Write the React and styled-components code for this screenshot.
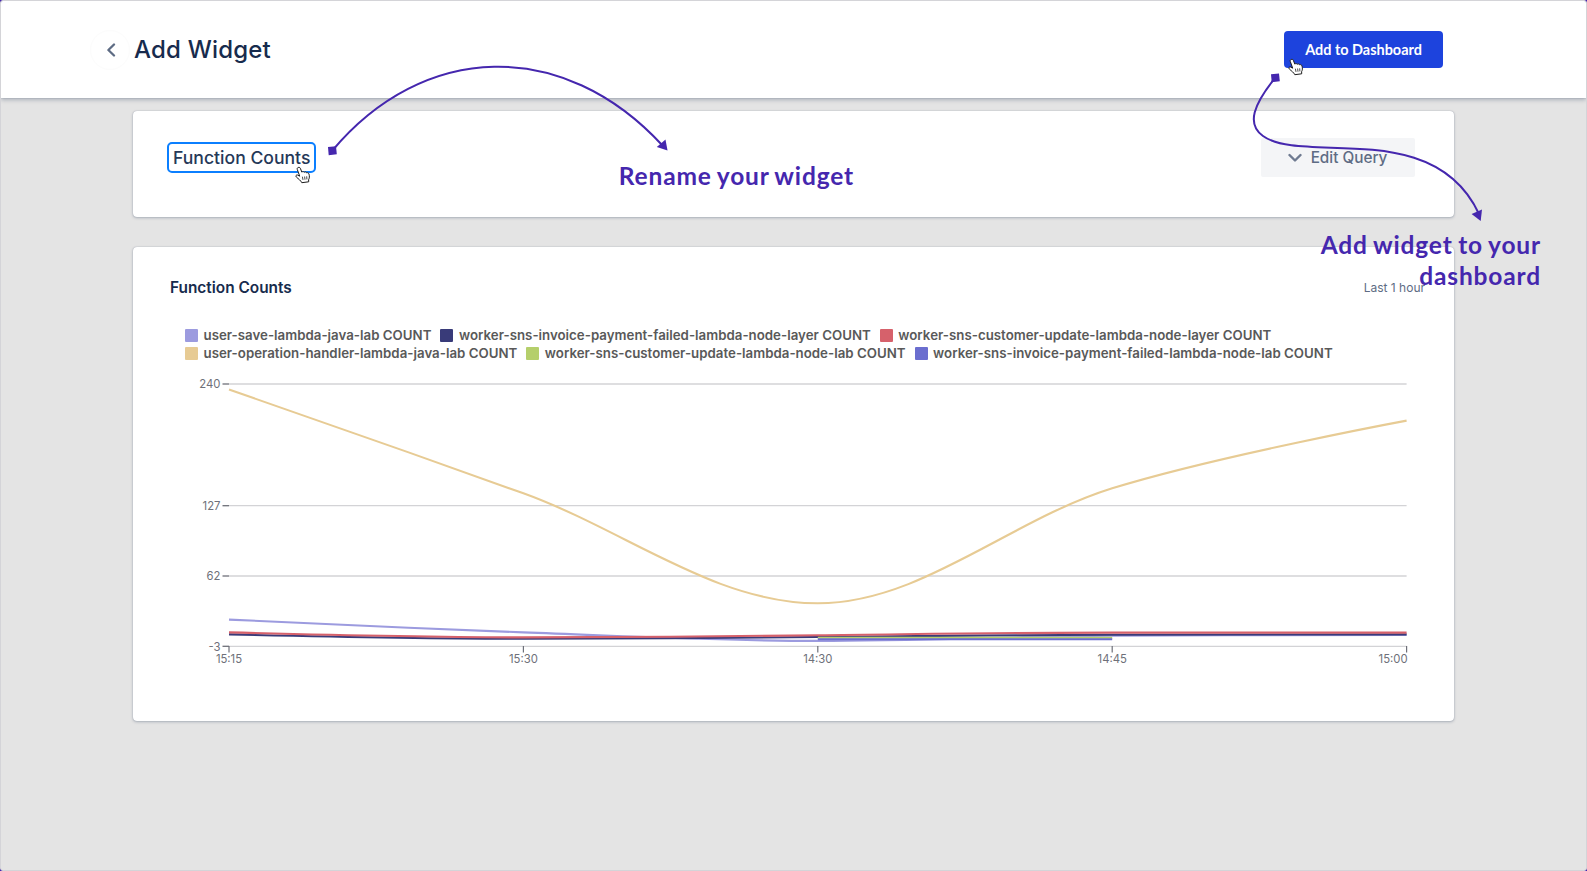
import React from "react";
import styled, { createGlobalStyle } from "styled-components";

const GlobalStyle = createGlobalStyle`
  * { box-sizing: border-box; }
  body { margin: 0; background: #4527ae; font-family: Inter, "Liberation Sans", sans-serif; }
`;

const Page = styled.div`
  position: relative;
  width: 1587px;
  height: 871px;
  background: #e4e4e4;
  border: 1px solid #d4d4d8;
  border-radius: 3px;
  overflow: hidden;
`;

const Header = styled.header`
  height: 97px;
  padding: 0 143px 0 89px;
  display: flex;
  align-items: center;
  justify-content: space-between;
  background: #fff;
  box-shadow: 0 0 1px rgba(9, 30, 66, 0.25), 0 2px 4px rgba(9, 30, 66, 0.25);
`;

const TitleGroup = styled.div`
  display: flex;
  align-items: center;
  gap: 4px;
`;

const BackButton = styled.button`
  width: 40px;
  height: 40px;
  padding: 0 0 0 1px;
  display: grid;
  place-items: center;
  border: 1px solid #fcfcfc;
  border-radius: 50%;
  background: #fff;
`;

const PageTitle = styled.h1`
  margin: 0;
  font-size: 24px;
  line-height: 32px;
  font-weight: 500;
  letter-spacing: 0.2px;
  color: #172b4d;
`;

const PrimaryButton = styled.button`
  width: 159px;
  height: 37px;
  padding: 0;
  border: 0;
  border-radius: 4px;
  background: #1d43dd;
  color: #fff;
  font: 700 14.45px/20px Lato, sans-serif;
`;

const Content = styled.main`
  padding: 13px 132px 0;
  display: flex;
  flex-direction: column;
  gap: 30px;
`;

const Card = styled.section`
  height: ${(p) => p.$height}px;
  background: #fff;
  border-radius: 4px;
  box-shadow: 0 0 1px rgba(9, 30, 66, 0.35), 0 1px 3px rgba(9, 30, 66, 0.25);
`;

const QueryCard = styled(Card)`
  padding: 27px 39px 0 34px;
  display: flex;
  justify-content: space-between;
  align-items: flex-start;
`;

const NameField = styled.div`
  width: 149px;
  height: 31px;
  margin-top: 4px;
  padding-left: 4px;
  border: 2px solid #0b7fff;
  border-radius: 5px;
  font-size: 17.6px;
  line-height: 27px;
  font-weight: 500;
  color: #253858;
  white-space: nowrap;
`;

const EditButton = styled.button`
  width: 154px;
  height: 39px;
  padding: 1px 1px 0 0;
  display: flex;
  align-items: center;
  justify-content: center;
  gap: 9px;
  border: 0;
  border-radius: 2px;
  background: #f4f5f7;
  color: #5e6c84;
  font: 500 15.3px/20px Inter, sans-serif;
`;

const CardHeader = styled.div`
  padding: 30px 29px 0 37px;
  display: flex;
  justify-content: space-between;
  align-items: center;
`;

const CardTitle = styled.h2`
  margin: 0;
  font-size: 15.4px;
  line-height: 22px;
  font-weight: 600;
  color: #172b4d;
`;

const Range = styled.span`
  font-size: 12px;
  line-height: 22px;
  color: #5e6c84;
`;

const Legend = styled.div`
  padding: 27px 0 0 52px;
`;

const LegendRow = styled.div`
  display: flex;
  gap: 9px;
  height: 18px;
  align-items: center;
`;

const LegendItem = styled.span`
  display: flex;
  align-items: center;
  gap: 5.5px;
  font-size: 13.28px;
  line-height: 18px;
  font-weight: 600;
  letter-spacing: 0.018px;
  color: #595959;
  white-space: nowrap;
`;

const Swatch = styled.i`
  width: 13px;
  height: 13px;
  border-radius: 1px;
  background: ${(p) => p.$color};
`;

const Chart = styled.svg`
  display: block;
  width: 1321px;
  height: 300px;
  margin-top: 13.5px;
  font-family: Inter, sans-serif;
  font-size: 11.3px;
  fill: #6e7079;
`;

const Overlay = styled.svg`
  position: absolute;
  inset: -1px;
  width: 1587px;
  height: 871px;
  pointer-events: none;
`;

const Note = styled.p`
  position: absolute;
  top: ${(p) => p.$top}px;
  right: ${(p) => p.$right}px;
  margin: 0;
  font: 700 24.5px/31px Lato, sans-serif;
  letter-spacing: 0.85px;
  word-spacing: -1.2px;
  text-align: right;
  color: #4527ae;
  white-space: nowrap;
`;

const legend = [
  [
    ["user-save-lambda-java-lab COUNT", "#9c9bdf"],
    ["worker-sns-invoice-payment-failed-lambda-node-layer COUNT", "#393b79"],
    ["worker-sns-customer-update-lambda-node-layer COUNT", "#d6616b"],
  ],
  [
    ["user-operation-handler-lambda-java-lab COUNT", "#e7cb94"],
    ["worker-sns-customer-update-lambda-node-lab COUNT", "#b5cf6b"],
    ["worker-sns-invoice-payment-failed-lambda-node-lab COUNT", "#6b6ecf"],
  ],
];

const stops = [96, 390.4, 684.8, 979.2, 1273.6];
const yTicks = [["240", 8], ["127", 129.7], ["62", 200], ["-3", 270.3]];
const xTicks = ["15:15", "15:30", "14:30", "14:45", "15:00"];

const series = [
  ["#9c9bdf", "M96 243.6 C96 243.6 287 252.6 390.4 256.4 C493 260 582 264.9 684.8 264.9 C788 264.9 876 260.3 979.2 259.6 C1082 259 1273.6 259 1273.6 259"],
  ["#393b79", "M96 258.4 C96 258.4 287 262.8 390.4 262.8 C493 262.8 582 261.8 684.8 261 C788 260 876 259 979.2 258.7 L1273.6 258.4"],
  ["#b5cf6b", "M684.8 261.8 H979.2"],
  ["#6b6ecf", "M684.8 263.3 H979.2"],
  ["#d6616b", "M96 256.4 C96 256.4 287 261.4 390.4 261.4 C493 261.4 582 260.3 684.8 259.3 C788 258.2 876 256.6 979.2 256.6 L1273.6 256.6"],
  ["#e7cb94", "M96 13.5 C96 13.5 287.4 80 390.4 117.3 C493.4 154.7 581.8 227.3 684.8 227.3 C787.8 227.3 876.2 144.3 979.2 112.3 C1082.2 80.3 1273.6 44.6 1273.6 44.6"],
];

const Cursor = ({ x, y }) => (
  <g transform={`translate(${x} ${y})`} strokeLinejoin="round">
    <path
      d="M3.2 1C4.4.4 5.2 1.2 5.5 2.2L6.8 5.6C7.6 4.8 8.8 5 9.2 5.8C10 5 11.2 5.3 11.5 6.3C12.6 5.8 13.7 6.4 14 7.6C14.6 9.8 14.5 11.6 13.6 13.2L13.7 15.3L6.8 16.2C5.6 13.8 3.8 12.8 1.3 10.5C.4 9.5 1.2 8.2 2.5 8.5L4.7 9.7L2.3 3C2 2 2.3 1.3 3.2 1Z"
      fill="#fff" stroke="#1b1b1b" strokeWidth="1"
    />
    <path d="M7.4 10.2L8 13.4M9.6 10L10 13.2M11.7 9.8L11.9 12.9" fill="none" stroke="#1b1b1b" strokeWidth=".8" />
  </g>
);

export default function App() {
  return (
    <>
      <GlobalStyle />
      <Page>
        <Header>
          <TitleGroup>
            <BackButton aria-label="Back">
              <svg width="10" height="14" viewBox="0 0 10 14" fill="none" stroke="#5e6c84" strokeWidth="2.3">
                <path d="M8 1.5L2.4 7L8 12.5" strokeLinecap="round" strokeLinejoin="round" />
              </svg>
            </BackButton>
            <PageTitle>Add Widget</PageTitle>
          </TitleGroup>
          <PrimaryButton>Add to Dashboard</PrimaryButton>
        </Header>
        <Content>
          <QueryCard $height={106}>
            <NameField>Function Counts</NameField>
            <EditButton>
              <svg width="14" height="10" viewBox="0 0 14 10" fill="none" stroke="#6f7b91" strokeWidth="2.4">
                <path d="M1.5 2L7 7.5L12.5 2" strokeLinecap="round" strokeLinejoin="round" />
              </svg>
              Edit Query
            </EditButton>
          </QueryCard>
          <Card $height={474}>
            <CardHeader>
              <CardTitle>Function Counts</CardTitle>
              <Range>Last 1 hour</Range>
            </CardHeader>
            <Legend>
              {legend.map((row, i) => (
                <LegendRow key={i}>
                  {row.map(([name, color]) => (
                    <LegendItem key={name}>
                      <Swatch $color={color} />
                      {name}
                    </LegendItem>
                  ))}
                </LegendRow>
              ))}
            </Legend>
            <Chart viewBox="0 0 1321 300">
              {yTicks.map(([label, y]) => (
                <g key={label}>
                  <path d={`M96 ${y}H1273.6`} stroke="#d3d3d6" strokeWidth="1.3" />
                  <path d={`M89.5 ${y}H96`} stroke="#6e7079" strokeWidth="1.3" />
                  <text x="87.5" y={y + 4.2} textAnchor="end">{label}</text>
                </g>
              ))}
              {xTicks.map((label, i) => (
                <g key={label}>
                  <path d={`M${stops[i]} 270V276.5`} stroke="#6e7079" strokeWidth="1.2" />
                  <text x={i === 4 ? stops[i] + 1 : stops[i]} y="287" textAnchor={i === 4 ? "end" : "middle"}>{label}</text>
                </g>
              ))}
              {series.map(([color, d]) => (
                <path key={color} d={d} fill="none" stroke={color} strokeWidth="2.1" />
              ))}
            </Chart>
          </Card>
        </Content>
        <Overlay viewBox="0 0 1587 871">
          <g fill="none" stroke="#4527ae" strokeWidth="2">
            <path d="M332 151C423 42 563 37 663 146" />
            <path d="M1275 78C1254 104 1246 124 1263 136C1303 165 1434 117 1479 214" />
          </g>
          <g fill="#4527ae">
            <path d="M328 147L336 146.3L336.8 154.3L328.7 155.2Z" />
            <path d="M1271 74.3L1279 73.5L1279.8 81.3L1271.7 82.2Z" />
            <path d="M667.5 150.5L656.8 147L665.5 139.5Z" />
            <path d="M1480.7 221L1471.6 214L1482 209.5Z" />
          </g>
          <Cursor x={295} y={166.5} />
          <Cursor x={1288} y={58.5} />
        </Overlay>
        <Note $top={159} $right={732}>Rename your widget</Note>
        <Note $top={228} $right={45}>Add widget to your<br />dashboard</Note>
      </Page>
    </>
  );
}
